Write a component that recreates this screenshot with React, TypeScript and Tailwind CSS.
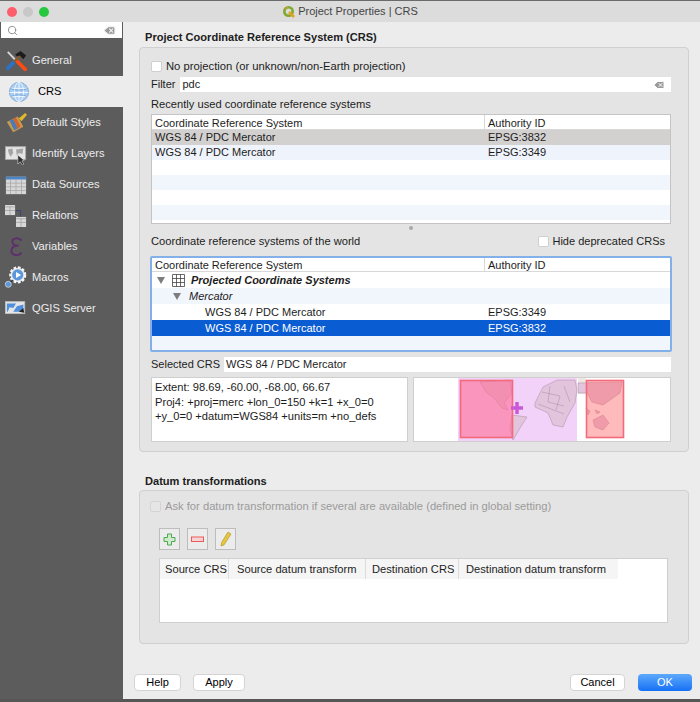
import { ReactNode } from "react";
import { Search, Delete } from "lucide-react";

const font = "font-['Liberation_Sans',Arial,sans-serif]";

function GeneralIcon() {
  return (
    <svg width="22" height="22" viewBox="0 0 24 24">
      <path d="M3 2 L21 21" stroke="#d8d8d8" strokeWidth="2" />
      <path d="M13 12 L22 21" stroke="#ff4a12" strokeWidth="4" strokeLinecap="round" />
      <path d="M19 3 L4 19" stroke="#8a5a2c" strokeWidth="2.5" />
      <path d="M9 14 L3 20" stroke="#2a72c8" strokeWidth="4" strokeLinecap="round" />
      <path d="M11 5 L17 1 L23 6 L20 10 L16 6 L13 7 Z" fill="#1c1c1c" />
    </svg>
  );
}

function GlobeIcon() {
  return (
    <svg width="22" height="22" viewBox="0 0 24 24" fill="none">
      <circle cx="12" cy="12" r="10.5" fill="#a9cdf2" stroke="#7fa9d6" />
      <ellipse cx="12" cy="12" rx="5" ry="10.5" stroke="#f4f8fd" />
      <path d="M12 1.5 V22.5 M2 8 H22 M1.5 12.5 H22.5 M3 17 H21" stroke="#f4f8fd" />
      <path d="M2 8 Q12 12 22 8 M3 17 Q12 13 21 17" stroke="#5f93cc" strokeWidth="0.7" />
    </svg>
  );
}

function StylesIcon() {
  return (
    <svg width="22" height="22" viewBox="0 0 24 24">
      <path d="M2 11 L14 5 L20 16 L9 22 Z" fill="#c99a4a" />
      <path d="M5 9.5 L9 7.5 L14 18 L10 20 Z" fill="#4b7bb8" />
      <path d="M9 7.5 L12 6 L17 16 L14 18 Z" fill="#d2622e" />
      <path d="M15 7 L22 1 L24 3 L18 10 Z" fill="#e0b92c" />
    </svg>
  );
}

function IdentifyIcon() {
  return (
    <svg width="22" height="22" viewBox="0 0 24 24">
      <rect x="0.5" y="4" width="22" height="14" fill="#e4e4e4" stroke="#a8a8a8" />
      <path d="M3 7 L8 6 L9 11 L6 15 L4 11 Z M12 7 L20 6 L19 12 L15 11 L13 14 Z" fill="#a5a5a5" />
      <path d="M14 13 L14 23 L16.5 20.5 L19 24 L20.5 23 L18.5 19.5 L21 19 Z" fill="#303030" stroke="#e8e8e8" strokeWidth="0.6" />
    </svg>
  );
}

function DataIcon() {
  return (
    <svg width="22" height="22" viewBox="0 0 24 24">
      <rect x="1" y="3" width="22" height="19" fill="#d7d7d7" />
      <rect x="1" y="3" width="22" height="3" fill="#4d86c6" />
      <path d="M1 10 H23 M1 14 H23 M1 18 H23 M6 6 V22 M12 6 V22 M18 6 V22" stroke="#a4a4a4" strokeWidth="0.8" />
    </svg>
  );
}

function RelationsIcon() {
  return (
    <svg width="22" height="22" viewBox="0 0 24 24">
      <path d="M12 6 H17 V14" fill="none" stroke="#33456e" strokeWidth="1" />
      <rect x="0" y="0" width="11" height="11" fill="#d8d8d8" />
      <path d="M0 2 H11 M0 6 H11 M5.5 2 V11" stroke="#9c9c9c" strokeWidth="0.8" />
      <rect x="12" y="13" width="11" height="11" fill="#d8d8d8" />
      <path d="M12 15 H23 M12 19 H23 M17.5 15 V24" stroke="#9c9c9c" strokeWidth="0.8" />
    </svg>
  );
}

function VariablesIcon() {
  return (
    <svg width="22" height="22" viewBox="0 0 24 24" fill="none">
      <path d="M18 5 C15 1 8 2 8 6 C8 9 11 10.5 15 10.5 C10 10.5 7 12 7 16 C7 21 15 23 18 18" stroke="#5e2d6e" strokeWidth="2" />
    </svg>
  );
}

function MacrosIcon() {
  return (
    <svg width="24" height="23" viewBox="0 0 28 26">
      <circle cx="16" cy="10" r="8.5" fill="#e6e6e6" stroke="#f5f5f5" strokeWidth="3" strokeDasharray="3 2" />
      <circle cx="16" cy="10" r="6.5" fill="#5b97dc" />
      <path d="M14 6.5 L20 10 L14 13.5 Z" fill="#fff" />
      <circle cx="5" cy="21" r="3.5" fill="#5b97dc" stroke="#d0d0d0" />
      <path d="M8 18 L10 16" stroke="#333" strokeWidth="1.5" />
    </svg>
  );
}

function ServerIcon() {
  return (
    <svg width="22" height="22" viewBox="0 0 24 24">
      <rect x="0.5" y="4" width="21" height="13" fill="#e6e6e6" stroke="#bdbdbd" />
      <path d="M2 6 L12 6 L9 11 L5 10 L3 15 L2 15 Z M13 9 L20 7 L20 12 L15 15 L9 15 Z" fill="#4f8fdc" />
      <path d="M15 15 L20 11 L21 16 Z" fill="#222" />
    </svg>
  );
}

function QgisIcon() {
  return (
    <svg width="14" height="14" viewBox="0 0 14 14" fill="none">
      <circle cx="6.5" cy="6.5" r="4.2" stroke="#7fa92f" strokeWidth="2.6" />
      <path d="M7 7 L12 12" stroke="#e1a21f" strokeWidth="2.6" />
      <path d="M3 4 L6 2" stroke="#c9a227" strokeWidth="1.5" />
    </svg>
  );
}

const NAV: { label: string; icon: ReactNode; active?: boolean }[] = [
  { label: "General", icon: <GeneralIcon /> },
  { label: "CRS", icon: <GlobeIcon />, active: true },
  { label: "Default Styles", icon: <StylesIcon /> },
  { label: "Identify Layers", icon: <IdentifyIcon /> },
  { label: "Data Sources", icon: <DataIcon /> },
  { label: "Relations", icon: <RelationsIcon /> },
  { label: "Variables", icon: <VariablesIcon /> },
  { label: "Macros", icon: <MacrosIcon /> },
  { label: "QGIS Server", icon: <ServerIcon /> },
];

function Sidebar() {
  return (
    <div className="w-[123px] shrink-0 flex flex-col text-[11.15px]">
      <div className="h-[16px] bg-white flex items-center pl-[6px] pr-[6px] mx-px">
        <Search size={11} className="text-[#8a8a8a]" />
        <Delete size={13} className="ml-auto text-[#f4f4f4] fill-[#9a9a9a]" />
      </div>
      <div className="mt-[7px]">
        {NAV.map((n) => (
          <div
            key={n.label}
            className={
              n.active
                ? "h-[31px] flex items-center bg-[#ececec] text-black pl-[7px] gap-[7px]"
                : "h-[31px] flex items-center text-[#ececec] pl-[4px] gap-[4px]"
            }
          >
            <span className="w-[24px] flex justify-center shrink-0">{n.icon}</span>
            <span>{n.label}</span>
          </div>
        ))}
      </div>
    </div>
  );
}

function Check({ disabled, className }: { disabled?: boolean; className?: string }) {
  return (
    <span
      className={
        "block w-[11px] h-[11px] rounded-[2px] border shrink-0 " +
        (disabled ? "border-[#d4d4d4] bg-[#e6e6e6] " : "border-[#cfcfcf] bg-white ") +
        (className ?? "")
      }
    />
  );
}

function CrsTable({ rows, focus }: { rows: ReactNode; focus?: boolean }) {
  return (
    <div className="bg-white flex flex-col h-full overflow-hidden">
      <div className={(focus ? "h-[14px] leading-[14px] " : "h-[15px] leading-[16px] ") + "flex shrink-0 border-b border-[#d8d8d8]"}>
        <div className="w-[333px] pl-[3px] border-r border-[#d8d8d8]">Coordinate Reference System</div>
        <div className="pl-[3px]">Authority ID</div>
      </div>
      {rows}
      {focus ? <div className="flex-1 bg-[#f1f5fc]" /> : null}
    </div>
  );
}

function Row({
  name,
  id,
  cls,
  indent,
}: {
  name?: ReactNode;
  id?: string;
  cls?: string;
  indent?: string;
}) {
  return (
    <div className={"h-[15px] shrink-0 flex items-center " + (cls ?? "")}>
      <div className={"w-[333px] shrink-0 flex items-center " + (indent ?? "pl-[3px]")}>{name}</div>
      <div className="pl-[3px]">{id}</div>
    </div>
  );
}

function Triangle() {
  return <span className="block w-0 h-0 border-l-[4px] border-r-[4px] border-t-[7px] border-l-transparent border-r-transparent border-t-[#7d7d7d]" />;
}

function MiniMap() {
  return (
    <svg width="256" height="63" viewBox="0 0 256 63" className="block">
      <rect x="44" y="0" width="119" height="63" fill="#f2d2f9" />
      <path d="M164 0 H172 V16 H164 Z" fill="#eee8e0" />
      {/* continents */}
      <g fill="#e2c4dc" stroke="#a88ba4" strokeWidth="0.5">
        <path d="M66 4 L96 2 L98 15 L90 25 L94 32 L88 30 L80 20 L72 14 Z" />
        <path d="M98 37 L113 39 L106 50 L99 62 L96 50 Z" />
        <path d="M121 25 L129 9 L143 2 L161 2 L163 12 L161 25 L153 39 L149 49 L139 47 L134 35 L121 29 Z" />
        <path d="M164 5 L208 4 L206 15 L189 27 L178 24 L173 15 L164 15 Z" />
        <path d="M179 42 L189 37 L195 45 L189 52 L181 49 Z" />
        <path d="M172 30 L176 33 L174 37 Z M181 32 L186 34 L183 36 Z" />
      </g>
      <path d="M128 14 L146 18 L142 32 M136 8 L134 24 L150 28 M124 26 L150 36 M150 8 L156 24" fill="none" stroke="#a88ba4" strokeWidth="0.5" />
      <rect x="46.5" y="2.5" width="52" height="57" fill="#ff6a92" fillOpacity="0.58" stroke="#f36a7a" strokeWidth="1.6" />
      <rect x="172.5" y="2.5" width="37" height="57" fill="#ff6f72" fillOpacity="0.48" stroke="#f36a7a" strokeWidth="1.6" />
      <path d="M103 24 V36 M97 30 H109" stroke="#c95ad6" strokeWidth="3.5" />
    </svg>
  );
}

function ToolBtn({ children }: { children: ReactNode }) {
  return (
    <div className="w-[21px] h-[22px] border border-[#bdbdbd] bg-[#ececec] flex items-center justify-center">
      {children}
    </div>
  );
}

function Btn({ w, children, primary }: { w: string; children: ReactNode; primary?: boolean }) {
  return (
    <div
      className={
        w +
        " h-[17px] rounded-[4px] flex items-center justify-center " +
        (primary
          ? "bg-gradient-to-b from-[#5ca9fb] to-[#1470f5] text-white"
          : "bg-white border border-[#d4d4d4] text-black")
      }
    >
      {children}
    </div>
  );
}

export default function App() {
  return (
    <div className={"w-[700px] h-[702px] bg-[#5c5c5c] flex flex-col overflow-hidden text-[11px] text-[#1d1d1d] " + font}>
      <div className="h-px bg-[#6b6b6b] shrink-0" />
      <div className="h-[21px] shrink-0 bg-[#dcdcdc] flex items-center">
        <div className="flex gap-[6px] pl-[7px]">
          <span className="w-[10px] h-[10px] rounded-full bg-[#fc5f6b]" />
          <span className="w-[10px] h-[10px] rounded-full bg-[#c8c8c8]" />
          <span className="w-[10px] h-[10px] rounded-full bg-[#27c83f]" />
        </div>
        <div className="flex-1 flex items-center justify-center gap-[2px] text-[#444] pr-[49px]">
          <QgisIcon />
          <span>Project Properties | CRS</span>
        </div>
      </div>
      <div className="h-[677px] shrink-0 flex">
        <Sidebar />
        <div className="flex-1 min-w-0 bg-[#ececec] flex flex-col pl-[16px] pr-[11px]">
          <div className="h-[25px] pl-[6px] font-bold flex items-end pb-[1px] text-[#202020] text-[11.07px]">
            Project Coordinate Reference System (CRS)
          </div>
          <div className="h-[405px] bg-[#e4e4e4] border border-[#d0d0d0] rounded-[4px] pl-[11px] pr-[17px] flex flex-col">
            <div className="h-[19px] mt-[9px] flex items-center gap-[4px] text-[11.25px]">
              <Check />
              <span>No projection (or unknown/non-Earth projection)</span>
            </div>
            <div className="h-[15px] mt-[1px] flex items-center gap-[4px]">
              <span>Filter</span>
              <div className="flex-1 bg-white h-[15px] flex items-center pl-[2px] pr-[6px] ml-[1px]">
                <span>pdc</span>
                <Delete size={12} className="ml-auto text-white fill-[#9a9a9a]" />
              </div>
            </div>
            <div className="h-[15px] mt-[5px] flex items-center text-[11.15px]">Recently used coordinate reference systems</div>
            <div className="h-[110px] mt-[2px] border border-[#c4c4c4]">
              <CrsTable
                rows={
                  <>
                    <Row name="WGS 84 / PDC Mercator" id="EPSG:3832" cls="bg-[#d3d0d0]" />
                    <Row name="WGS 84 / PDC Mercator" id="EPSG:3349" cls="bg-[#eff3fb]" />
                    <Row />
                    <Row cls="bg-[#f1f5fc]" />
                    <Row />
                    <Row cls="bg-[#f1f5fc]" />
                  </>
                }
              />
            </div>
            <div className="h-[6px] flex justify-center items-center mt-[1px]">
              <span className="w-[4px] h-[4px] rounded-full bg-[#a8a8a8] block" />
            </div>
            <div className="h-[17px] mt-[2px] flex items-center justify-between pr-[6px]">
              <span className="text-[11.15px]">Coordinate reference systems of the world</span>
              <span className="flex items-center gap-[3px]">
                <Check />
                Hide deprecated CRSs
              </span>
            </div>
            <div className="h-[96px] mt-[6px] -mx-[1px] border-2 border-[#84b0ea] rounded-[2px]">
              <CrsTable
                focus
                rows={
                  <>
                    <div className="h-[16px] shrink-0 flex items-center pl-[5px]">
                      <Triangle />
                      <svg width="13" height="13" viewBox="0 0 13 13" fill="none" stroke="#444" strokeWidth="0.8" className="ml-[7px]">
                        <path d="M.5.5h12v12H.5zM.5 4.5h12M.5 8.5h12M4.5.5v12M8.5.5v12" />
                      </svg>
                      <span className="ml-[6px] font-bold italic">Projected Coordinate Systems</span>
                    </div>
                    <div className="h-[16px] shrink-0 flex items-center pl-[21px] bg-[#f1f5fc]">
                      <Triangle />
                      <span className="ml-[8px] italic">Mercator</span>
                    </div>
                    <Row name="WGS 84 / PDC Mercator" id="EPSG:3349" cls="!h-[16px]" indent="pl-[53px]" />
                    <Row name="WGS 84 / PDC Mercator" id="EPSG:3832" cls="!h-[16px] bg-[#0a5cd2] text-white" indent="pl-[53px]" />
                  </>
                }
              />
            </div>
            <div className="h-[15px] mt-[5px] flex items-center gap-[4px]">
              <span>Selected CRS</span>
              <div className="flex-1 bg-white h-[15px] flex items-center pl-[2px]">WGS 84 / PDC Mercator</div>
            </div>
            <div className="h-[65px] mt-[5px] flex gap-[5px]">
              <div className="w-[257px] bg-white border border-[#cfcfcf] pl-[3px] pt-[2px] leading-[14.5px] text-[11.15px]">
                Extent: 98.69, -60.00, -68.00, 66.67
                <br />
                Proj4: +proj=merc +lon_0=150 +k=1 +x_0=0
                <br />
                +y_0=0 +datum=WGS84 +units=m +no_defs
              </div>
              <div className="flex-1 min-w-0 bg-white border border-[#cfcfcf] overflow-hidden">
                <MiniMap />
              </div>
            </div>
          </div>
          <div className="h-[24px] mt-[14px] pl-[6px] flex items-end font-bold text-[#202020] text-[11.07px]">Datum transformations</div>
          <div className="h-[154px] bg-[#e4e4e4] border border-[#d0d0d0] rounded-[4px] pl-[19px] pr-[20px] flex flex-col">
            <div className="h-[15px] mt-[8px] -ml-[9px] flex items-center gap-[4px] text-[#9b9b9b] text-[11.2px]">
              <Check disabled />
              <span>Ask for datum transformation if several are available (defined in global setting)</span>
            </div>
            <div className="flex gap-[7px] mt-[14px] h-[22px]">
              <ToolBtn>
                <svg width="13" height="13" viewBox="0 0 13 13">
                  <path d="M4.5 1h4v3.5H12v4H8.5V12h-4V8.5H1v-4h3.5z" fill="#cdeccb" stroke="#4fa74f" />
                </svg>
              </ToolBtn>
              <ToolBtn>
                <svg width="13" height="7" viewBox="0 0 13 7">
                  <rect x="0.5" y="1" width="12" height="4.5" fill="#fbd3d3" stroke="#ea5a5a" />
                </svg>
              </ToolBtn>
              <ToolBtn>
                <svg width="13" height="16" viewBox="0 0 13 16">
                  <path d="M9 1 L12 3 L5 14 L2 15 L2.5 11.5 Z" fill="#e6c63c" stroke="#a8912d" strokeWidth="0.6" />
                </svg>
              </ToolBtn>
            </div>
            <div className="h-[65px] mt-[8px] bg-white border border-[#cfcfcf]">
              <div className="h-[20px] flex bg-[#f5f5f5] w-[458px] leading-[20px] whitespace-nowrap text-[11.15px]">
                <div className="w-[69px] pl-[5px] border-r border-[#dcdcdc]">Source CRS</div>
                <div className="w-[137px] pl-[8px] border-r border-[#dcdcdc]">Source datum transform</div>
                <div className="w-[93px] pl-[6px] border-r border-[#dcdcdc]">Destination CRS</div>
                <div className="flex-1 pl-[7px]">Destination datum transform</div>
              </div>
            </div>
          </div>
          <div className="mt-[30px] flex items-center -ml-[5px] -mr-[3px] text-[#111]">
            <Btn w="w-[47px]">Help</Btn>
            <span className="w-[12px]" />
            <Btn w="w-[52px]">Apply</Btn>
            <span className="flex-1" />
            <Btn w="w-[55px]">Cancel</Btn>
            <span className="w-[13px]" />
            <Btn w="w-[54px]" primary>OK</Btn>
          </div>
        </div>
      </div>
      <div className="flex-1 bg-[#565656]" />
    </div>
  );
}
